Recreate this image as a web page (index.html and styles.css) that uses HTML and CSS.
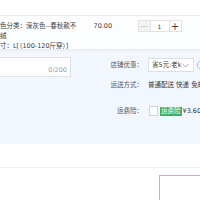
FILE: index.html
```html
<!DOCTYPE html>
<html>
<head>
<meta charset="utf-8">
<link rel="stylesheet" href="styles.css">
</head>
<body>
<div class="page">
  <div class="top"></div>
  <div class="item">
    <div class="sku">
      <div class="sku-line">颜色分类：深灰色--春秋款不加绒</div>
      <div class="sku-line">尺寸：L[（100-120斤穿）]</div>
    </div>
    <div class="price">70.00</div>
    <div class="qty">
      <span class="qbtn minus">−</span>
      <span class="qinput">1</span>
      <span class="qbtn plus">+</span>
    </div>
  </div>
  <div class="extra">
    <div class="msg-col">
      <div class="msg-box"><span class="count">0/200</span></div>
    </div>
    <div class="opts">
      <div class="opt-row r1">
        <span class="label">店铺优惠：</span>
        <span class="select">省5元:老k<svg class="chev" width="7" height="5" viewBox="0 0 7 5"><path d="M0.5 0.8 L3.5 4 L6.5 0.8" fill="none" stroke="#999" stroke-width="0.8"/></svg></span>
        <span class="info"></span>
      </div>
      <div class="opt-row r2">
        <span class="label">运送方式：</span>
        <span class="ship">普通配送 快递 免邮</span>
      </div>
      <div class="opt-row r3">
        <span class="label">运费险：</span>
        <span class="check"></span>
        <span class="badge">运费险</span>
        <span class="fee">¥3.60</span>
      </div>
    </div>
  </div>
  <div class="gap"></div>
  <div class="bottom">
    <div class="redbox"></div>
  </div>
</div>
</body>
</html>
```

FILE: styles.css
```css
html, body {
  margin: 0;
  padding: 0;
  background: #fff;
  overflow: hidden;
}
.page {
  width: 200px;
  height: 200px;
  overflow: hidden;
  font-family: "DejaVu Sans", "Noto Sans CJK SC", sans-serif;
  font-size: 6.5px;
  color: #3c3c3c;
}
.top {
  height: 15px;
}
.item {
  height: 35px;
  border-top: 1px solid #e6ebf4;
  border-bottom: 1px solid #eceff5;
  background: #fcfdff;
  display: flex;
  box-sizing: border-box;
}
.sku {
  margin-left: -6.5px;
  width: 84px;
  padding-top: 5px;
  line-height: 10px;
  flex: none;
}
.sku-line {
  width: 84px;
}
.price {
  margin-left: 16px;
  padding-top: 5px;
  line-height: 10px;
  width: 44px;
  flex: none;
}
.qty {
  display: flex;
  margin-top: 4px;
  height: 12px;
}
.qbtn, .qinput {
  box-sizing: border-box;
  height: 12px;
  border: 1px solid #e3e3e3;
  display: flex;
  align-items: center;
  justify-content: center;
  background: #fff;
}
.qbtn {
  width: 13px;
  font-size: 10px;
  color: #444;
}
.minus {
  background: #f3f3f3;
  color: #ccc;
}
.qinput {
  width: 18px;
  border-left: none;
  border-right: none;
  font-size: 6px;
}
.extra {
  height: 94px;
  background: #f2f6fe;
  border-top: 1px solid #e9edf5;
  display: flex;
  align-items: flex-start;
  box-sizing: border-box;
}
.msg-col {
  width: 110px;
  flex: none;
  padding-top: 6px;
}
.msg-box {
  margin-left: -10px;
  width: 81px;
  height: 20px;
  box-sizing: border-box;
  border: 1px solid #dfe2e8;
  background: #fff;
  display: flex;
  align-items: flex-end;
  justify-content: flex-end;
  padding: 0 3px 2px 0;
}
.count {
  color: #9a9a9a;
  font-size: 6.5px;
  line-height: 8px;
}
.opts {
  display: flex;
  flex-direction: column;
  flex: none;
  width: 100px;
}
.opt-row {
  display: flex;
  align-items: center;
  white-space: nowrap;
  flex: none;
  line-height: 10px;
}
.label {
  width: 33px;
  text-align: right;
  flex: none;
  color: #555;
}
.r1 {
  margin-top: 7px;
  height: 14px;
}
.select {
  margin-left: 5px;
  width: 46px;
  height: 14px;
  box-sizing: border-box;
  border: 1px solid #dcdfe6;
  background: #fff;
  display: flex;
  align-items: center;
  padding-left: 3px;
  flex: none;
  position: relative;
}
.chev {
  position: absolute;
  right: 4px;
  top: 4px;
}
.info {
  margin-left: 3px;
  width: 8px;
  height: 8px;
  border: 1px solid #9ec3ee;
  border-radius: 50%;
  flex: none;
}
.r2 {
  margin-top: 8px;
  height: 10px;
}
.ship {
  margin-left: 5px;
}
.r3 {
  margin-top: 16px;
  height: 10px;
}
.check {
  margin-left: 6px;
  width: 7px;
  height: 8px;
  border: 1px solid #d3d3d3;
  background: #fff;
  flex: none;
}
.badge {
  margin-left: 2px;
  background: #3fae62;
  color: #fff;
  padding: 0 1px;
  height: 9px;
  line-height: 9px;
}
.fee {
  margin-left: 1px;
  color: #333;
}
.gap {
  height: 23px;
  border-bottom: 1px solid #f1f1f1;
}
.bottom {
  display: flex;
  justify-content: flex-end;
  padding-top: 7px;
}
.redbox {
  width: 40px;
  height: 40px;
  border: 1px solid #e3a6b3;
  border-right: none;
}
```
